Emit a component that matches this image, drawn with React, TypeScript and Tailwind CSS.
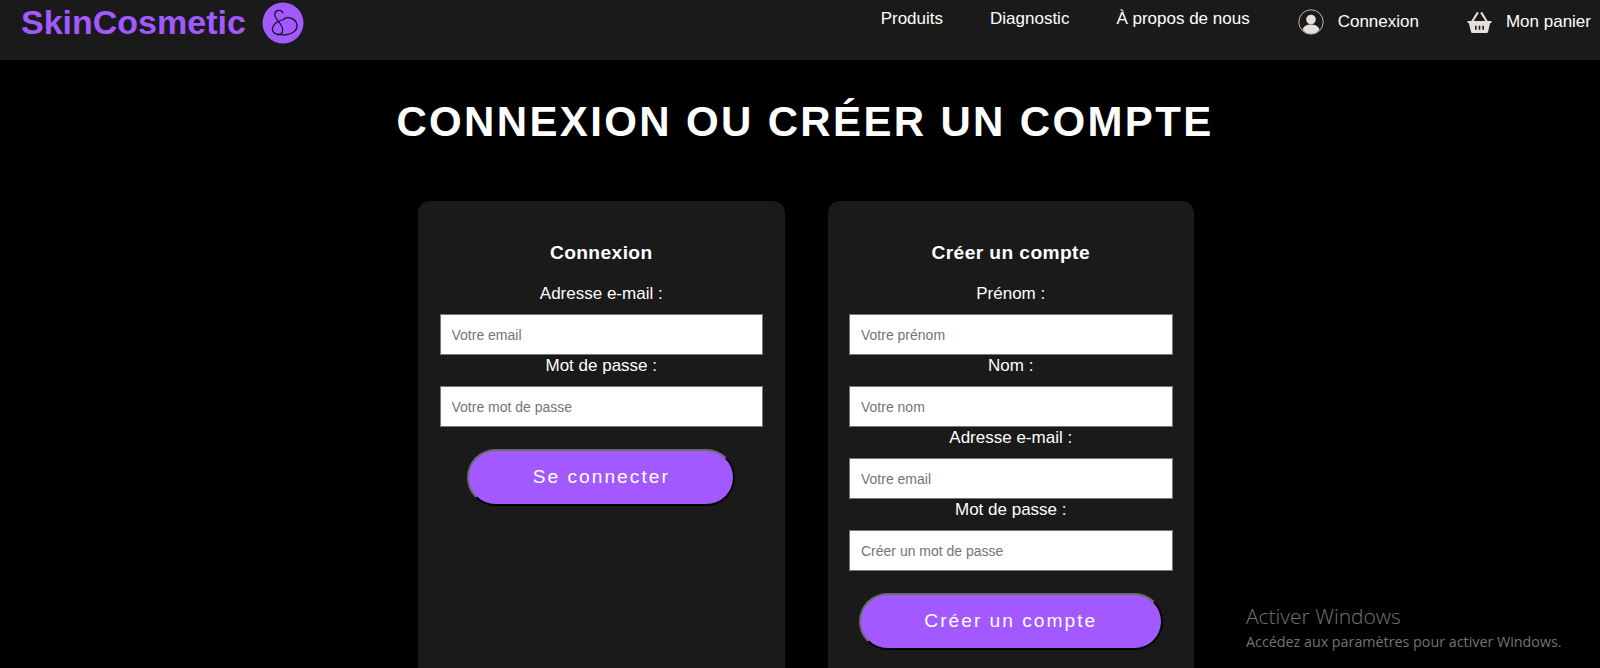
import { ReactNode } from "react";

const arial = "font-['Liberation_Sans',Arial,sans-serif]";

function Field({ label, placeholder }: { label: string; placeholder: string }) {
  return (
    <div className="flex flex-col items-center">
      <label className="h-[18px] text-[17px] leading-[18px] text-white">{label}</label>
      <input
        readOnly
        placeholder={placeholder}
        className={`${arial} mt-[11px] mb-[2px] h-[41px] w-full border border-[#767676] bg-white px-[11px] text-[14px] text-black outline-none placeholder:text-[#757575]`}
      />
    </div>
  );
}

function PurpleButton({ children, width }: { children: ReactNode; width: string }) {
  return (
    <button
      className={`${width} mx-auto mt-[20px] block h-[57px] rounded-[30px] border-2 border-t-[#6b6b6b] border-l-[#6b6b6b] border-r-black border-b-black bg-[#a259ff] text-[19.2px] tracking-[2px] text-white`}
    >
      {children}
    </button>
  );
}

function Card({ title, children }: { title: string; children: ReactNode }) {
  return (
    <section className="h-[480px] w-[366.5px] rounded-[12px] bg-[#1a1a1a] px-[21.5px] pt-[41px]">
      <h2 className="mb-[21px] text-center text-[19.2px] leading-[22px] font-bold tracking-[0.4px] text-white">
        {title}
      </h2>
      {children}
    </section>
  );
}

function SkLogo() {
  return (
    <svg width="42" height="42" viewBox="0 0 42 42" className="ml-[16px]">
      <circle cx="21" cy="21" r="20.5" fill="#a259ff" />
      <g fill="none" stroke="#120a20" strokeWidth="1.2" strokeLinecap="round">
        <path d="M21 11C19.500 7.500 14 7.500 12.800 11.500C12 15 15.500 18 18 21.500C20.500 25 22 28.500 19.500 31.500C17 33.800 12 32.500 10.500 28.500C9.500 25 12.500 21.500 15.500 20C17.500 19 19.500 18 21.500 17.500" />
        <path d="M21.500 17.500C24 14 33.500 15.500 35 22.500C36 28 30 32.500 24 32.800C21 33 18 32.800 16 32" />
      </g>
    </svg>
  );
}

function UserIcon() {
  return (
    <svg width="26" height="26" viewBox="0 0 26 26" className="mr-[14px]">
      <circle cx="13" cy="13" r="12.200" fill="none" stroke="#b8b8b8" strokeWidth="1" />
      <circle cx="13" cy="10.500" r="4.800" fill="#e6e0dc" />
      <path d="M4.500 20.500c1.500-4 5-5 8.500-5s7 1 8.500 5c-2 2.700-5 4.300-8.500 4.300s-6.500-1.600-8.500-4.300z" fill="#e6e0dc" />
    </svg>
  );
}

function BasketIcon() {
  return (
    <svg width="25" height="23" viewBox="0 0 24 22" className="mr-[14px]">
      <path d="M5 10 10 2M19 10 14 2" stroke="#e6e0dc" strokeWidth="2" strokeLinecap="round" />
      <path d="M0.500 9.500h23v2h-1.300l-2 8.500a1.500 1.500 0 0 1-1.400 1H5.200a1.500 1.500 0 0 1-1.400-1l-2-8.500H0.500z" fill="#e6e0dc" />
      <path d="M8.500 14v4M12 14v4M15.500 14v4" stroke="#1a1a1a" strokeWidth="1.500" />
    </svg>
  );
}

export default function App() {
  return (
    <div className={`${arial} relative h-[668px] w-[1600px] overflow-hidden bg-black`}>
      <header className="flex h-[60px] items-start justify-between bg-[#1a1a1a] pr-[9px] pl-[21px]">
        <div className="flex items-center pt-[2px]">
          <span className="-mt-[3px] text-[34px] leading-[38px] font-bold text-[#a259ff]">SkinCosmetic</span>
          <SkLogo />
        </div>
        <nav className="flex items-center pt-[9px] text-[17px] leading-[22px] text-white">
          <a className="mr-[47px] -mt-[6px]">Produits</a>
          <a className="mr-[47px] -mt-[6px]">Diagnostic</a>
          <a className="mr-[48px] -mt-[6px]">À propos de nous</a>
          <span className="mr-[48px] flex items-center">
            <UserIcon />
            Connexion
          </span>
          <span className="flex items-center">
            <BasketIcon />
            Mon panier
          </span>
        </nav>
      </header>

      <h1 className="mt-[37px] ml-[10px] text-center text-[42px] leading-[50px] font-bold tracking-[2.350px] text-white">
        CONNEXION OU CRÉER UN COMPTE
      </h1>

      <main className="mt-[54px] ml-[418px] flex gap-[43px]">
        <Card title="Connexion">
          <Field label="Adresse e-mail :" placeholder="Votre email" />
          <Field label="Mot de passe :" placeholder="Votre mot de passe" />
          <PurpleButton width="w-[268px]">Se connecter</PurpleButton>
        </Card>
        <Card title="Créer un compte">
          <Field label="Prénom :" placeholder="Votre prénom" />
          <Field label="Nom :" placeholder="Votre nom" />
          <Field label="Adresse e-mail :" placeholder="Votre email" />
          <Field label="Mot de passe :" placeholder="Créer un mot de passe" />
          <PurpleButton width="w-[304px]">Créer un compte</PurpleButton>
        </Card>
      </main>

      <div className="absolute top-[603px] left-[1246px] font-['Open_Sans',sans-serif] text-[#737373]">
        <p className="text-[21px] leading-[26px] font-light">Activer Windows</p>
        <p className="mt-[4px] text-[14.300px] leading-[18px]">Accédez aux paramètres pour activer Windows.</p>
      </div>
    </div>
  );
}
